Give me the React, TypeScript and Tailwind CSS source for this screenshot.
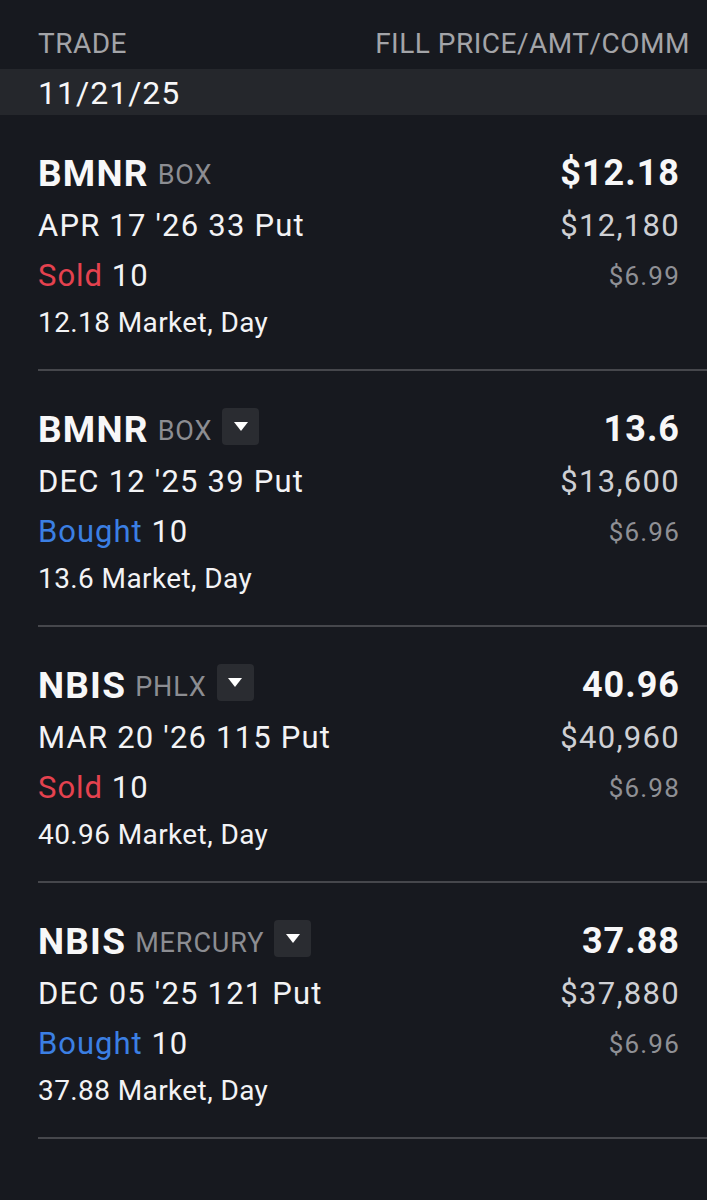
import * as React from "react";

type Trade = {
  symbol: string;
  exchange: string;
  dropdown: boolean;
  contract: string;
  side: "Sold" | "Bought";
  qty: number;
  note: string;
  fill: string;
  amount: string;
  comm: string;
};

const trades: Trade[] = [
  { symbol: "BMNR", exchange: "BOX", dropdown: false, contract: "APR 17 '26 33 Put", side: "Sold", qty: 10, note: "12.18 Market, Day", fill: "$12.18", amount: "$12,180", comm: "$6.99" },
  { symbol: "BMNR", exchange: "BOX", dropdown: true, contract: "DEC 12 '25 39 Put", side: "Bought", qty: 10, note: "13.6 Market, Day", fill: "13.6", amount: "$13,600", comm: "$6.96" },
  { symbol: "NBIS", exchange: "PHLX", dropdown: true, contract: "MAR 20 '26 115 Put", side: "Sold", qty: 10, note: "40.96 Market, Day", fill: "40.96", amount: "$40,960", comm: "$6.98" },
  { symbol: "NBIS", exchange: "MERCURY", dropdown: true, contract: "DEC 05 '25 121 Put", side: "Bought", qty: 10, note: "37.88 Market, Day", fill: "37.88", amount: "$37,880", comm: "$6.96" },
];

function TradeRow({ trade }: { trade: Trade }) {
  return (
    <div className="pt-[31px] pb-[25px] pr-[27px] border-b-2 border-[#46474c]">
      {/* symbol + fill price */}
      <div className="flex items-center justify-between h-[55px]">
        <div className="flex items-center">
          <span className="text-[37px] leading-[55px] font-bold tracking-[1.2px] text-[#f7f7f8]">{trade.symbol}</span>
          <span className="ml-[9px] text-[27px] leading-[55px] tracking-[0.9px] text-[#8c8d92] translate-y-[2px]">{trade.exchange}</span>
          {trade.dropdown && (
            <span className="ml-[10px] -translate-y-[3px] flex items-center justify-center w-[37px] h-[37px] rounded-[4px] bg-[#2a2c31]">
              <svg width="14" height="10" viewBox="0 0 14 10">
                <path d="M0 0h14L7 9z" fill="#ffffff" />
              </svg>
            </span>
          )}
        </div>
        <span className="text-[36px] leading-[55px] font-bold tracking-[1px] text-[#f7f7f8]">{trade.fill}</span>
      </div>

      {/* contract + amount */}
      <div className="flex items-center justify-between h-[50px]">
        <span className="text-[31px] leading-[50px] tracking-[1.2px] text-[#f3f3f5]">{trade.contract}</span>
        <span className="text-[31px] leading-[50px] tracking-[1.3px] text-[#cfd0d4]">{trade.amount}</span>
      </div>

      {/* side + commission */}
      <div className="flex items-center justify-between h-[50px]">
        <span className="text-[31px] leading-[50px] tracking-[1px] text-[#f3f3f5]">
          <span className={trade.side === "Sold" ? "text-[#e5424f]" : "text-[#3b7fe3]"}>{trade.side}</span> {trade.qty}
        </span>
        <span className="text-[26px] leading-[50px] tracking-[1.2px] text-[#8f9095]">{trade.comm}</span>
      </div>

      <div className="h-[43px] text-[28px] leading-[43px] tracking-[0.4px] text-[#f3f3f5]">{trade.note}</div>
    </div>
  );
}

export default function App() {
  return (
    <div className="min-h-[1200px] w-full bg-[#17191f] font-['Roboto',sans-serif]">
      {/* column header */}
      <div className="flex justify-between h-[69px] pt-[24px] pr-[17px] pl-[38px] text-[28px] leading-[40px] tracking-[0.5px] text-[#a3a4a8]">
        <span>TRADE</span>
        <span>FILL PRICE/AMT/COMM</span>
      </div>

      {/* date group */}
      <div className="h-[46px] pt-[2px] pl-[38px] bg-[#25272c] text-[32px] leading-[44px] tracking-[1px] text-[#f7f7f8]">
        11/21/25
      </div>

      <div className="pl-[38px]">
        {trades.map((t, i) => (
          <TradeRow key={i} trade={t} />
        ))}
      </div>
    </div>
  );
}
